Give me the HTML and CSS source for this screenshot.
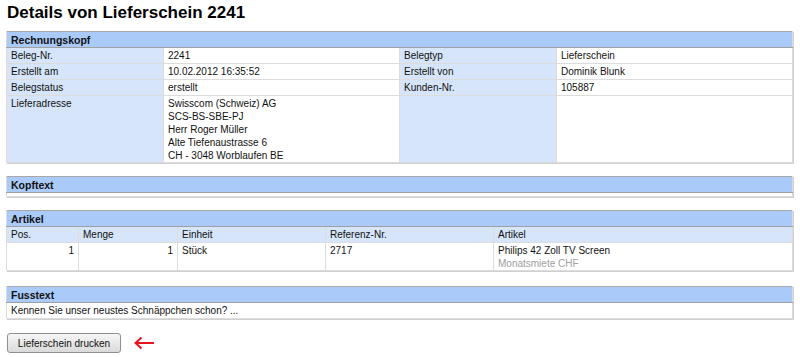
FILE: index.html
```html
<!DOCTYPE html>
<html>
<head>
<meta charset="utf-8">
<link rel="stylesheet" href="styles.css">
</head>
<body>
<h1 class="title">Details von Lieferschein 2241</h1>

<table class="box kv">
  <colgroup><col class="c1"><col class="c2"><col class="c3"><col class="c4"></colgroup>
  <tr><th class="head" colspan="4">Rechnungskopf</th></tr>
  <tr><td class="lbl">Beleg-Nr.</td><td>2241</td><td class="lbl">Belegtyp</td><td>Lieferschein</td></tr>
  <tr><td class="lbl">Erstellt am</td><td>10.02.2012 16:35:52</td><td class="lbl">Erstellt von</td><td>Dominik Blunk</td></tr>
  <tr><td class="lbl">Belegstatus</td><td>erstellt</td><td class="lbl">Kunden-Nr.</td><td>105887</td></tr>
  <tr class="addr"><td class="lbl">Lieferadresse</td><td>Swisscom (Schweiz) AG<br>SCS-BS-SBE-PJ<br>Herr Roger Müller<br>Alte Tiefenaustrasse 6<br>CH - 3048 Worblaufen BE</td><td class="lbl"></td><td></td></tr>
</table>

<table class="box">
  <tr><th class="head">Kopftext</th></tr>
  <tr><td class="empty"></td></tr>
</table>

<table class="box items">
  <colgroup><col class="p1"><col class="p2"><col class="p3"><col class="p4"><col class="p5"></colgroup>
  <tr><th class="head" colspan="5">Artikel</th></tr>
  <tr class="colhead"><td>Pos.</td><td>Menge</td><td>Einheit</td><td>Referenz-Nr.</td><td>Artikel</td></tr>
  <tr class="item"><td class="num">1</td><td class="num">1</td><td>Stück</td><td>2717</td><td>Philips 42 Zoll TV Screen<br><span class="sub">Monatsmiete CHF</span></td></tr>
</table>

<table class="box">
  <tr><th class="head">Fusstext</th></tr>
  <tr><td>Kennen Sie unser neustes Schnäppchen schon? ...</td></tr>
</table>

<div class="actions">
  <button class="btn">Lieferschein drucken</button>
  <svg class="arrow" width="22" height="14" viewBox="0 0 22 14"><path d="M21 7H3M8.5 1.5L2.5 7L8.5 12.5" fill="none" stroke="#e8141b" stroke-width="2"/></svg>
</div>
</body>
</html>
```
FILE: styles.css
```css
body {
  margin: 0;
  padding: 0 7px 0 6px;
  font-family: "Liberation Sans", Arial, sans-serif;
  font-size: 10px;
  color: #111;
  background: #fff;
}
.title {
  font-size: 17px;
  font-weight: bold;
  margin: 0;
  padding: 3px 0 0 1px;
  height: 28px;
  line-height: 19px;
  color: #000;
  box-sizing: border-box;
  height: 31px;
}
.box {
  width: 100%;
  border-collapse: collapse;
  table-layout: fixed;
  border: 1px solid #a8a8a8;
  box-shadow: 1px 1px 0 #d0d0d0;
  margin-bottom: 13px;
}
.box td, .box th {
  padding: 2px 4px 1px 4px;
  text-align: left;
  vertical-align: top;
  line-height: 12px;
  border: 1px solid #dcdcdc;
  border-top: 0;
}
.head {
  background: #aacbfa;
  font-weight: bold;
  font-size: 10.5px;
  border-bottom: 1px solid #a0a0a0 !important;
}
.lbl {
  background: #d6e5f9;
}
.c1 { width: 157px; }
.c2 { width: 236px; }
.c3 { width: 157px; }
.addr td {
  padding-top: 1px;
  padding-bottom: 0;
  line-height: 13px;
  height: 64px;
}
.empty {
  height: 3px;
  padding: 0 !important;
}
.p1 { width: 72px; }
.p2 { width: 99px; }
.p3 { width: 148px; }
.p4 { width: 168px; }
.colhead td {
  background: #d6e5f9;
}
.item td {
  line-height: 13px;
  padding-top: 1px;
  padding-bottom: 0;
  height: 25px;
}
.items {
  margin-bottom: 15px;
}
.num { text-align: right !important; }
.sub { color: #a0a0a0; }
.actions {
  display: flex;
  align-items: center;
  gap: 12px;
  padding: 1px 0 0 1px;
}
.btn {
  font-family: "Liberation Sans", Arial, sans-serif;
  font-size: 10px;
  color: #111;
  height: 20px;
  width: 114px;
  border: 1px solid #8f8f8f;
  border-radius: 3px;
  background: linear-gradient(#f6f6f6, #dadada);
  padding: 0;
}
.arrow { display: block; }
```
